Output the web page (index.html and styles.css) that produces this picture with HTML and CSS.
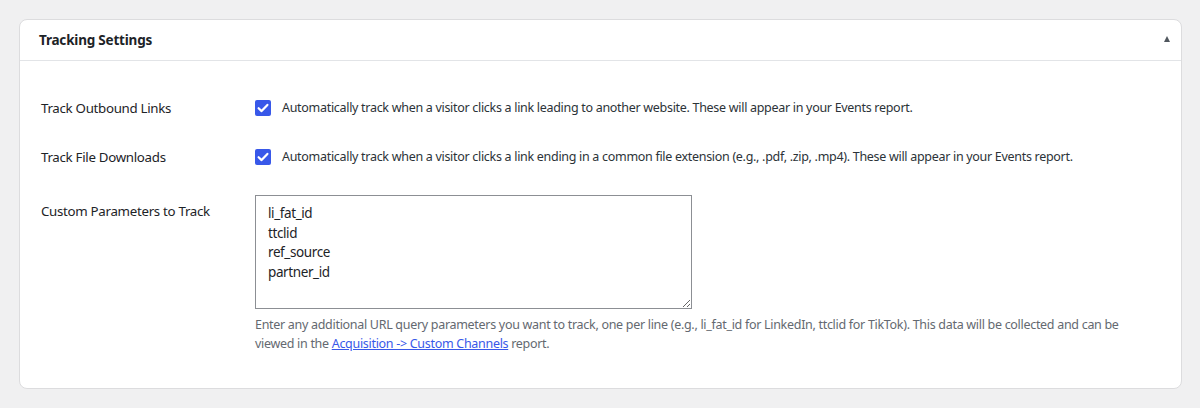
FILE: index.html
```html
<!DOCTYPE html>
<html lang="en">
<head>
<meta charset="utf-8">
<title>Tracking Settings</title>
<link rel="stylesheet" href="styles.css">
</head>
<body>
<div class="card">
  <div class="card-header">
    <h2 class="card-title">Tracking Settings</h2>
    <span class="caret" aria-hidden="true"></span>
  </div>
  <div class="card-body">
    <div class="row row-check">
      <div class="label">Track Outbound Links</div>
      <div class="field">
        <label class="check-line">
          <span class="checkbox"><svg viewBox="0 0 16 16" width="16" height="16"><path d="M3.6 8.2 L6.6 11.1 L12.4 4.9" fill="none" stroke="#fff" stroke-width="2.2" stroke-linecap="round" stroke-linejoin="round"/></svg></span>
          <span class="check-text">Automatically track when a visitor clicks a link leading to another website. These will appear in your Events report.</span>
        </label>
      </div>
    </div>
    <div class="row row-check">
      <div class="label">Track File Downloads</div>
      <div class="field">
        <label class="check-line">
          <span class="checkbox"><svg viewBox="0 0 16 16" width="16" height="16"><path d="M3.6 8.2 L6.6 11.1 L12.4 4.9" fill="none" stroke="#fff" stroke-width="2.2" stroke-linecap="round" stroke-linejoin="round"/></svg></span>
          <span class="check-text">Automatically track when a visitor clicks a link ending in a common file extension (e.g., .pdf, .zip, .mp4). These will appear in your Events report.</span>
        </label>
      </div>
    </div>
    <div class="row row-area">
      <div class="label label-area">Custom Parameters to Track</div>
      <div class="field">
        <textarea class="params" rows="5">li_fat_id
ttclid
ref_source
partner_id</textarea>
        <p class="desc">Enter any additional URL query parameters you want to track, one per line (e.g., li_fat_id for LinkedIn, ttclid for TikTok). This data will be collected and can be viewed in the <a href="#">Acquisition -&gt; Custom Channels</a> report.</p>
      </div>
    </div>
  </div>
</div>
</body>
</html>
```
FILE: styles.css
```css
html, body {
  margin: 0;
  padding: 0;
}
body {
  background: #f0f0f1;
  font-family: "Noto Sans", "Open Sans", sans-serif;
  color: #1d2327;
  font-size: 12.5px;
  letter-spacing: -0.3px;
  padding: 19px 18px 0 19px;
}
.card {
  background: #fff;
  border: 1px solid #dcdcde;
  border-radius: 8px;
  box-sizing: border-box;
  width: 1163px;
  height: 370px;
}
.card-header {
  height: 40px;
  border-bottom: 1px solid #e2e4e7;
  display: flex;
  align-items: center;
  justify-content: space-between;
  padding: 0 11px 0 19px;
}
.card-title {
  margin: 0;
  font-size: 13.5px;
  font-weight: 700;
  letter-spacing: -0.2px;
  line-height: 20px;
}
.caret {
  width: 0;
  height: 0;
  border-left: 3.5px solid transparent;
  border-right: 3.5px solid transparent;
  border-bottom: 6px solid #50575e;
  margin-top: -2px;
}
.card-body {
  padding: 37px 20px 0 21px;
  display: flex;
  flex-direction: column;
  gap: 29px;
}
.row {
  display: flex;
}
.row-area {
  margin-top: -1px;
}
.label {
  width: 214px;
  flex: none;
  line-height: 20px;
  font-size: 13.3px;
  letter-spacing: -0.3px;
}
.label-area {
  padding-top: 6px;
}
.field {
  flex: 1;
}
.check-line {
  display: flex;
  align-items: center;
  gap: 11px;
  line-height: 20px;
}
.checkbox {
  width: 16px;
  height: 16px;
  background: #3858e9;
  border-radius: 2px;
  display: inline-flex;
  flex: none;
}
.check-text {
  color: #2c3338;
}
.params {
  display: block;
  box-sizing: border-box;
  width: 437px;
  height: 114px;
  margin: 0;
  border: 1px solid #8c8f94;
  border-radius: 0;
  padding: 8px 12px;
  font-family: "Noto Sans", "Open Sans", sans-serif;
  font-size: 13.5px;
  letter-spacing: -0.4px;
  line-height: 19.5px;
  color: #1d2327;
  resize: both;
}
.desc {
  margin: 6px 0 0;
  color: #646970;
  line-height: 19px;
  max-width: 868px;
}
.desc a {
  color: #3858e9;
}
```
